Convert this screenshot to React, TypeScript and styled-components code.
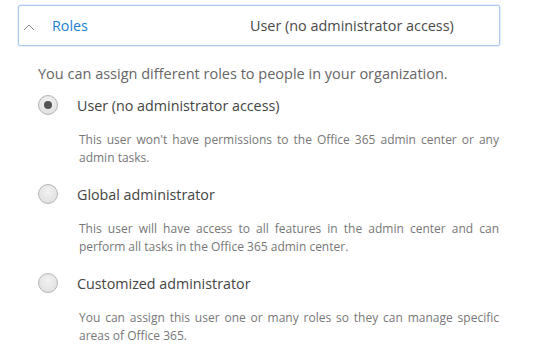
import { styled, createGlobalStyle } from 'styled-components';

const GlobalStyle = createGlobalStyle`
  body {
    margin: 0;
    background: #fff;
    font-family: 'Open Sans', 'Noto Sans', sans-serif;
  }
`;

const roles = [
  {
    label: 'User (no administrator access)',
    lines: ["This user won't have permissions to the Office 365 admin center or any", 'admin tasks.'],
    checked: true,
  },
  {
    label: 'Global administrator',
    lines: [
      'This user will have access to all features in the admin center and can',
      'perform all tasks in the Office 365 admin center.',
    ],
    checked: false,
  },
  {
    label: 'Customized administrator',
    lines: [
      'You can assign this user one or many roles so they can manage specific',
      'areas of Office 365.',
    ],
    checked: false,
  },
];

const App = () => {
  return (
    <>
      <GlobalStyle />
      <Page>
        <Header>
          <Chevron width="12" height="8" viewBox="0 0 12 8">
            <path d="M1 7 L6 2 L11 7" fill="none" stroke="#888" strokeWidth="1" />
          </Chevron>
          <Title>Roles</Title>
          <Value>User (no administrator access)</Value>
        </Header>
        <Body>
          <Intro>You can assign different roles to people in your organization.</Intro>
          <Options>
            {roles.map((role) => (
              <Option key={role.label}>
                <OptionRow>
                  <Radio $checked={role.checked} />
                  <Label>{role.label}</Label>
                </OptionRow>
                <Description>
                  {role.lines.map((line, i) => (
                    <Line key={i} $justify={i < role.lines.length - 1}>
                      {line}
                    </Line>
                  ))}
                </Description>
              </Option>
            ))}
          </Options>
        </Body>
      </Page>
    </>
  );
};

export default App;

const Page = styled.div`
  width: 543px;
  padding-top: 5px;
`;

const Header = styled.div`
  margin-left: 18px;
  width: 480px;
  height: 39px;
  border: 1px solid #a9c9ee;
  border-radius: 2px;
  box-shadow: 0 0 0 0.5px #cfe0f5;
  display: flex;
  align-items: center;
`;

const Chevron = styled.svg`
  margin-left: 4px;
  margin-top: 2px;
`;

const Title = styled.div`
  margin-left: 17px;
  width: 198px;
  color: #1a7fd6;
  font-size: 14.3px;
`;

const Value = styled.div`
  color: #4a4a4a;
  font-size: 14.4px;
`;

const Body = styled.div`
  padding: 18px 0 0 38px;
`;

const Intro = styled.div`
  color: #666;
  font-size: 14.5px;
  line-height: 20px;
`;

const Options = styled.div`
  display: flex;
  flex-direction: column;
  gap: 14px;
  margin-top: 8px;
`;

const Option = styled.div``;

const OptionRow = styled.div`
  display: flex;
  align-items: center;
  height: 26px;
`;

const Radio = styled.div<{ $checked: boolean }>`
  width: 18px;
  height: 18px;
  border: 1px solid #b5b5b5;
  border-radius: 50%;
  background: radial-gradient(circle at 50% 35%, #f2f2f2, #dcdcdc);
  display: flex;
  align-items: center;
  justify-content: center;

  &::after {
    content: '';
    display: ${(p) => (p.$checked ? 'block' : 'none')};
    width: 8px;
    height: 8px;
    border-radius: 50%;
    background: #555;
  }
`;

const Label = styled.div`
  margin-left: 19px;
  color: #444;
  font-size: 14.3px;
`;

const Description = styled.div`
  margin: 13px 0 0 41px;
  width: 420px;
  color: #777;
  font-size: 12px;
  line-height: 18px;
`;

const Line = styled.div<{ $justify: boolean }>`
  white-space: nowrap;
  text-align: ${(p) => (p.$justify ? 'justify' : 'left')};
  text-align-last: ${(p) => (p.$justify ? 'justify' : 'left')};
`;
